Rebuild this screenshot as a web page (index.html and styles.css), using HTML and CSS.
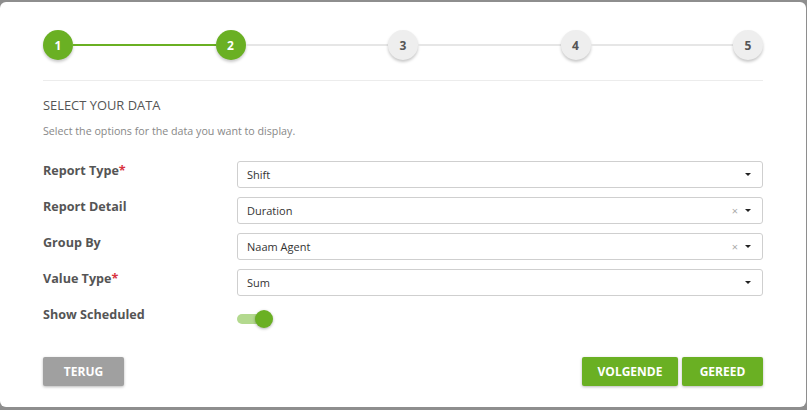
FILE: index.html
```html
<!DOCTYPE html>
<html>
<head>
<meta charset="utf-8">
<link rel="stylesheet" href="styles.css">
</head>
<body>
<div class="modal">
  <div class="stepper">
    <div class="step done">1</div>
    <div class="line done"></div>
    <div class="step done">2</div>
    <div class="line"></div>
    <div class="step">3</div>
    <div class="line"></div>
    <div class="step">4</div>
    <div class="line"></div>
    <div class="step">5</div>
  </div>
  <div class="divider"></div>
  <h2 class="title">SELECT YOUR DATA</h2>
  <p class="subtitle">Select the options for the data you want to display.</p>
  <div class="form">
    <div class="label">Report Type<span class="req">*</span></div>
    <div class="select"><span class="value">Shift</span><span class="arrow"></span></div>
    <div class="label">Report Detail</div>
    <div class="select"><span class="value">Duration</span><span class="clear">×</span><span class="arrow"></span></div>
    <div class="label">Group By</div>
    <div class="select"><span class="value">Naam Agent</span><span class="clear">×</span><span class="arrow"></span></div>
    <div class="label">Value Type<span class="req">*</span></div>
    <div class="select"><span class="value">Sum</span><span class="arrow"></span></div>
    <div class="label">Show Scheduled</div>
    <div class="toggle-cell"><div class="toggle"><span class="knob"></span></div></div>
  </div>
  <div class="actions">
    <button class="btn grey">TERUG</button>
    <div class="spacer"></div>
    <button class="btn green wide">VOLGENDE</button>
    <button class="btn green">GEREED</button>
  </div>
</div>
</body>
</html>
```
FILE: styles.css
```css
html, body {
  margin: 0;
  padding: 0;
}
body {
  background: #8e8e8e;
  font-family: "Open Sans", "Liberation Sans", sans-serif;
  width: 807px;
  height: 410px;
  overflow: hidden;
}
.modal {
  margin: 2px 1px 0 0;
  height: 405px;
  box-sizing: border-box;
  background: #fff;
  border-radius: 6px;
  padding: 28px 43px 0 43px;
}
.stepper {
  display: flex;
  align-items: center;
  height: 30px;
}
.step {
  width: 30px;
  height: 30px;
  flex: 0 0 30px;
  border-radius: 50%;
  background: #eeeeee;
  color: #555;
  font-weight: 700;
  font-size: 12px;
  display: flex;
  align-items: center;
  justify-content: center;
  box-shadow: 0 2px 3px rgba(0,0,0,0.22);
}
.step.done {
  background: #6ab023;
  color: #fff;
}
.line {
  flex: 1;
  height: 2px;
  background: #e6e6e6;
}
.line.done {
  background: #6ab023;
}
.divider {
  margin-top: 20px;
  height: 1px;
  background: #ececec;
}
.title {
  margin: 15px 0 0 0;
  font-size: 12.9px;
  line-height: 18px;
  font-weight: 400;
  color: #555;
}
.subtitle {
  margin: 10px 0 0 0;
  font-size: 10.7px;
  line-height: 15px;
  color: #888;
}
.form {
  margin-top: 22px;
  display: grid;
  grid-template-columns: 194px 1fr;
  grid-auto-rows: 27px;
  row-gap: 9px;
}
.label {
  font-size: 12.6px;
  font-weight: 700;
  color: #555;
  line-height: 20px;
}
.req {
  color: #d9343f;
}
.select {
  display: flex;
  align-items: center;
  border: 1px solid #cfcfcf;
  border-radius: 3px;
  padding: 0 11px 0 9px;
  box-sizing: border-box;
  height: 27px;
}
.value {
  flex: 1;
  font-size: 11px;
  color: #333;
}
.clear {
  font-size: 11px;
  color: #aaa;
  margin-right: 7px;
  line-height: 1;
}
.arrow {
  width: 0;
  height: 0;
  border-left: 3.5px solid transparent;
  border-right: 3.5px solid transparent;
  border-top: 3.5px solid #222;
}
.toggle-cell {
  padding-top: 5px;
}
.toggle {
  width: 36px;
  height: 18px;
  position: relative;
}
.toggle::before {
  content: "";
  position: absolute;
  left: 0;
  top: 4px;
  width: 30px;
  height: 10px;
  border-radius: 5px;
  background: #b3d98e;
}
.knob {
  position: absolute;
  left: 18px;
  top: 0;
  width: 18px;
  height: 18px;
  border-radius: 50%;
  background: #6ab023;
  box-shadow: 0 1px 3px rgba(0,0,0,0.3);
}
.actions {
  margin-top: 25px;
  display: flex;
  gap: 4px;
}
.spacer {
  flex: 1;
}
.btn {
  height: 29px;
  width: 81px;
  border: none;
  border-radius: 2px;
  color: #fff;
  font-family: "Open Sans", "Liberation Sans", sans-serif;
  font-weight: 700;
  font-size: 12px;
  padding: 0;
  box-shadow: 0 1px 3px rgba(0,0,0,0.28);
}
.btn.wide {
  width: 96px;
}
.btn.grey {
  background: #a0a0a0;
}
.btn.green {
  background: #6ab023;
}
```
